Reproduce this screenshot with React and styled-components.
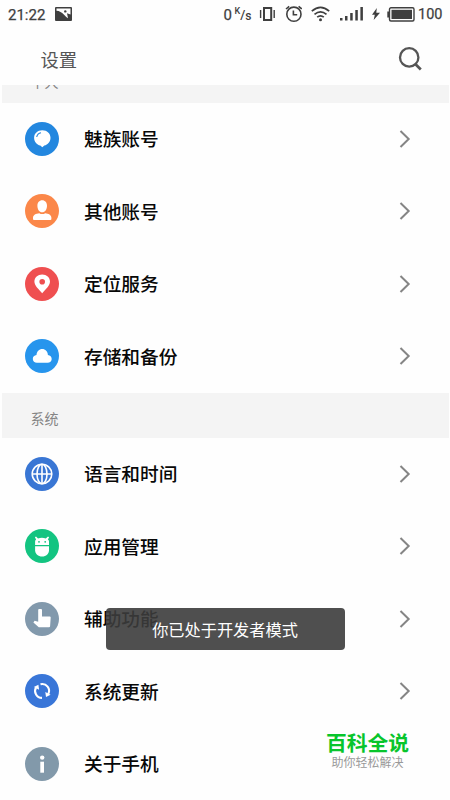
import React from "react";
import styled, { createGlobalStyle } from "styled-components";

const GlobalStyle = createGlobalStyle`
  *, *::before, *::after { box-sizing: border-box; }
  html, body { margin: 0; background: #fff; overflow: hidden; }
  svg { display: block; flex: none; }
`;

const Screen = styled.div`
  position: relative;
  width: 450px;
  height: 800px;
  overflow: hidden;
  display: flex;
  flex-direction: column;
  background: #fefefe;
  font-family: Roboto, "Noto Sans CJK SC", sans-serif;
`;

const StatusBar = styled.div`
  flex: none;
  display: flex;
  align-items: center;
  justify-content: space-between;
  height: 28px;
  padding: 0 8px;
  color: #3f3f3f;
`;

const StatusGroup = styled.div`
  display: flex;
  align-items: center;
  gap: ${(p) => p.$gap}px;
`;

const StatusText = styled.span`
  width: ${(p) => p.$width}px;
  font-size: ${(p) => p.$size || 15}px;
  font-weight: 400;
  -webkit-text-stroke: 0.25px #3f3f3f;
  line-height: 28px;
  padding-top: 1px;
  white-space: nowrap;
`;

const SpeedUnit = styled.span`
  display: flex;
  width: 15px;
  font-weight: 500;
  line-height: 12px;
`;

const UnitPart = styled.span`
  font-size: ${(p) => p.$size}px;
  transform: translateY(${(p) => p.$shift}px);
`;

const Header = styled.header`
  flex: none;
  display: flex;
  align-items: center;
  justify-content: space-between;
  height: 57px;
  padding: 4px 28px 0 40.5px;
`;

const Title = styled.h1`
  margin: 0;
  color: #555;
  font: 400 18.3px/28px "Noto Sans CJK SC", sans-serif;
`;

const List = styled.main`
  flex: 1;
  min-height: 0;
  overflow: hidden;
`;

const SectionHeading = styled.h2`
  height: 45px;
  margin: ${(p) => (p.$scrolled ? "-27.5px" : "0")} 1px 0 2px;
  padding: ${(p) => (p.$scrolled ? 3 : 4)}px 0 0 28.5px;
  background: #f4f4f4;
  color: #858585;
  font: 400 14px/42px "Noto Sans CJK SC", sans-serif;
`;

const Row = styled.div`
  display: flex;
  align-items: center;
  height: 72.5px;
  padding: 0 38px 0 25px;
`;

const Badge = styled.div`
  display: grid;
  place-items: center;
  width: 34px;
  height: 34px;
  border-radius: 50%;
  background: ${(p) => p.$color};
`;

const Label = styled.span`
  flex: 1;
  margin: -1px 0 0 25px;
  color: #080808;
  font: 500 18.7px/28px "Noto Sans CJK SC", sans-serif;
`;

const Toast = styled.div`
  position: absolute;
  left: 105.5px;
  top: 608px;
  width: 239px;
  height: 42px;
  padding-top: 1px;
  border-radius: 4px;
  background: rgba(60, 60, 60, 0.9);
  color: #fff;
  text-align: center;
  font: 400 16.2px/41px "Noto Sans CJK SC", sans-serif;
`;

const Watermark = styled.div`
  position: absolute;
  left: 317px;
  top: 730px;
  width: 101px;
  text-align: center;
  white-space: nowrap;
`;

const WatermarkName = styled.div`
  color: #08c52c;
  font: 700 20.8px/25px "Noto Sans CJK SC", sans-serif;
`;

const WatermarkTagline = styled.div`
  color: #999;
  font: 400 12px/14px "Noto Sans CJK SC", sans-serif;
`;

const PictureIcon = () => (
  <svg width="17" height="14" viewBox="0 0 17 14">
    <rect width="17" height="14" rx="1" fill="#3f3f3f" />
    <path d="M1.5 1.5H15.5V7.5L12 6.3 13 11.3Q10.8 9.8 8.8 7.5C6.8 5.4 4.5 4 1.5 3.8Z" fill="#fefefe" />
    <circle cx="10.3" cy="4.4" r="1.2" fill="#3f3f3f" />
  </svg>
);

const VibrateIcon = () => (
  <svg width="16" height="16" viewBox="0 0 16 16" fill="none" stroke="#3f3f3f">
    <rect x="5" y="2" width="7.2" height="12" strokeWidth="2" />
    <path d="M1.6 4v8M15.2 4v8" strokeWidth="1.4" />
  </svg>
);

const AlarmIcon = () => (
  <svg width="17" height="18" viewBox="0 0 17 18" fill="none" stroke="#3f3f3f" strokeWidth="1.6">
    <circle cx="8.9" cy="9.2" r="7.1" />
    <path d="M8.4 5.6v4.2h3.8M1 4 4.2 1.3M16.8 4 13.6 1.3" />
  </svg>
);

const WifiIcon = () => (
  <svg width="19" height="16" viewBox="0 0 19 16" fill="none" stroke="#3f3f3f" strokeWidth="1.7">
    <path d="M.8 5.2Q9.5-2.4 18.2 5.2M3.5 8.4q6-5.2 12 0M6.2 11.2q3.3-2.8 6.6 0" />
    <circle cx="9.5" cy="13.8" r="1.5" fill="#3f3f3f" stroke="none" />
  </svg>
);

const SignalIcon = () => (
  <svg width="23" height="14" viewBox="0 0 23 14" fill="#3f3f3f">
    <path d="M0 11h2.5v2.5H0ZM5 9h2.5v4.5H5ZM10.2 6h2.5v7.5h-2.5ZM15.3 3h2.5v10.5h-2.5ZM20.4 0h2.5v13.5h-2.5Z" />
  </svg>
);

const BoltIcon = () => (
  <svg width="8" height="12" viewBox="0 0 8 12" fill="#3f3f3f">
    <path d="M4.8 0 0 6.7h2.8L1.7 12 8 4.8H4.3Z" />
  </svg>
);

const BatteryIcon = () => (
  <svg width="28" height="15" viewBox="0 0 28 15">
    <rect x="2.5" y=".8" width="24.5" height="13.2" rx="1.5" fill="none" stroke="#3f3f3f" strokeWidth="1.4" />
    <rect x="4.5" y="2.8" width="20.5" height="9.2" fill="#3f3f3f" />
    <path d="M.3 4.5H2v6H.3Z" fill="#3f3f3f" />
  </svg>
);

const SearchIcon = () => (
  <svg width="24" height="24" viewBox="0 0 24 24" fill="none" stroke="#555" strokeWidth="2.3">
    <circle cx="11.2" cy="10.4" r="9.2" />
    <path d="m17.3 17 5.5 5.5" strokeWidth="2.7" />
  </svg>
);

const Chevron = () => (
  <svg width="13" height="18" viewBox="0 0 13 18" fill="none" stroke="#858585" strokeWidth="2">
    <path d="m1.5 1 8.2 8-8.2 8" />
  </svg>
);

const Glyph = ({ children }) => (
  <svg width="34" height="34" viewBox="0 0 34 34" fill="#fff">{children}</svg>
);

const FlymeGlyph = () => (
  <Glyph>
    <path d="M17.3 8.3c-4.8 0-8.2 3.2-8.2 7.4 0 4 2.6 6.9 6.2 7.9l2 1.7 2-1.7c3.6-1 6.2-3.9 6.2-7.9 0-4.2-3.4-7.4-8.2-7.4Z" />
    <path d="M11.7 15c.4-2.3 2-3.9 4.3-4.3" fill="none" stroke="#2587de" strokeWidth="1.1" />
  </Glyph>
);

const PersonGlyph = () => (
  <Glyph>
    <path d="M17.2 6.3c-2.9 0-4.8 2.3-4.8 5.4 0 3.6 2 6.6 4.8 6.6s4.8-3 4.8-6.6c0-3.1-1.9-5.4-4.8-5.4Z" />
    <path d="M8 25v-1.3c0-2.6 3-4.3 6.3-4.5 1.7 1.2 4.2 1.2 5.9 0 3.3.2 6.2 1.9 6.2 4.5V25q0 1-1 1H9q-1 0-1-1Z" />
  </Glyph>
);

const PinGlyph = () => (
  <Glyph>
    <path fillRule="evenodd" d="M17.2 7.4c-4.4 0-7.8 3.1-7.8 7.2 0 4.3 4.3 7.5 7.8 11.7 3.5-4.2 7.8-7.4 7.8-11.7 0-4.1-3.4-7.2-7.8-7.2Zm0 4.5a2.8 2.8 0 1 1 0 5.6 2.8 2.8 0 0 1 0-5.6Z" />
  </Glyph>
);

const CloudGlyph = () => (
  <Glyph>
    <path d="M12 23.8c-2.4 0-4.2-1.7-4.2-3.9 0-2.1 1.5-3.6 3.7-3.8.2-3.4 2.6-6 5.7-6 3.2 0 5.5 2.5 5.7 5.8 2.3.2 3.8 1.9 3.8 4 0 2.2-1.8 3.9-4.1 3.9Z" />
  </Glyph>
);

const GlobeGlyph = () => (
  <Glyph>
    <g fill="none" stroke="#fff" strokeWidth="1.6">
      <circle cx="17" cy="17" r="9.8" />
      <ellipse cx="17" cy="17" rx="5" ry="9.8" />
      <path d="M17 7.2v19.6M7.2 17h19.6" />
    </g>
  </Glyph>
);

const AndroidGlyph = () => (
  <Glyph>
    <path d="M10.1 15.9v-3.3c0-.9.4-1.6 1-2L9.9 8.3l1.1-.7 2 1.8a12 12 0 0 1 7.8 0l2.2-1.8 1.1.7-1.2 2.3c.7.5 1.1 1.1 1.1 2v3.3Z" />
    <path d="M10.1 17.3H24v4c0 3.7-2.9 6.3-6.9 6.3s-7-2.6-7-6.3Z" />
    <circle cx="14" cy="12.8" r=".9" fill="#13c481" />
    <circle cx="20.2" cy="12.8" r=".9" fill="#13c481" />
  </Glyph>
);

const HandGlyph = () => (
  <Glyph>
    <path d="M13.2 8q0-.9.9-.9h2q.9 0 .9.9v6.4h7.7q1 0 1 1l-.6 8.9q-.1 1-1.1 1h-9.6q-.7 0-1.2-.5l-4.8-4.4 1.2-1.7 3.6 1Z" />
  </Glyph>
);

const UpdateGlyph = () => (
  <Glyph>
    <g fill="none" stroke="#fff" strokeWidth="2.1">
      <path d="M17 23.9A6.9 6.9 0 0 1 11 13.6" />
      <path d="M15.5 10.2A6.9 6.9 0 0 1 23.2 20.2" />
    </g>
    <path d="m8.8 13 4.6-2.3.7 5.1ZM25.6 20.8 21 23.1l-.7-5.1Z" />
  </Glyph>
);

const InfoGlyph = () => (
  <Glyph>
    <circle cx="17.2" cy="10.6" r="2.2" />
    <path d="M15.3 14.7H19v11h-3.7Z" />
  </Glyph>
);

const personal = [
  { label: "魅族账号", color: "#2387df", Icon: FlymeGlyph },
  { label: "其他账号", color: "#fb8749", Icon: PersonGlyph },
  { label: "定位服务", color: "#ef4f50", Icon: PinGlyph },
  { label: "存储和备份", color: "#2795ed", Icon: CloudGlyph },
];

const system = [
  { label: "语言和时间", color: "#3976d4", Icon: GlobeGlyph },
  { label: "应用管理", color: "#13c481", Icon: AndroidGlyph },
  { label: "辅助功能", color: "#8299ac", Icon: HandGlyph },
  { label: "系统更新", color: "#3976d8", Icon: UpdateGlyph },
  { label: "关于手机", color: "#8299aa", Icon: InfoGlyph, plain: true },
];

const SettingRow = ({ label, color, Icon, plain }) => (
  <Row>
    <Badge $color={color}><Icon /></Badge>
    <Label>{label}</Label>
    {!plain && <Chevron />}
  </Row>
);

export default function App() {
  return (
    <>
      <GlobalStyle />
      <Screen>
        <StatusBar>
          <StatusGroup $gap={8}>
            <StatusText $width={39}>21:22</StatusText>
            <PictureIcon />
          </StatusGroup>
          <StatusGroup $gap={9.5}>
            <StatusGroup $gap={3}>
              <StatusText $width={8}>0</StatusText>
              <SpeedUnit>
                <UnitPart $size={9} $shift={-3}>K</UnitPart>
                <UnitPart $size={13} $shift={1}>/</UnitPart>
                <UnitPart $size={12} $shift={2}>s</UnitPart>
              </SpeedUnit>
            </StatusGroup>
            <VibrateIcon />
            <AlarmIcon />
            <WifiIcon />
            <SignalIcon />
            <StatusGroup $gap={6.5}>
              <BoltIcon />
              <StatusGroup $gap={3.5}>
                <BatteryIcon />
                <StatusText $width={24} $size={14.5}>100</StatusText>
              </StatusGroup>
            </StatusGroup>
          </StatusGroup>
        </StatusBar>
        <Header>
          <Title>设置</Title>
          <SearchIcon />
        </Header>
        <List>
          <SectionHeading $scrolled>个人</SectionHeading>
          {personal.map((item) => <SettingRow key={item.label} {...item} />)}
          <SectionHeading>系统</SectionHeading>
          {system.map((item) => <SettingRow key={item.label} {...item} />)}
        </List>
        <Toast>你已处于开发者模式</Toast>
        <Watermark>
          <WatermarkName>百科全说</WatermarkName>
          <WatermarkTagline>助你轻松解决</WatermarkTagline>
        </Watermark>
      </Screen>
    </>
  );
}
